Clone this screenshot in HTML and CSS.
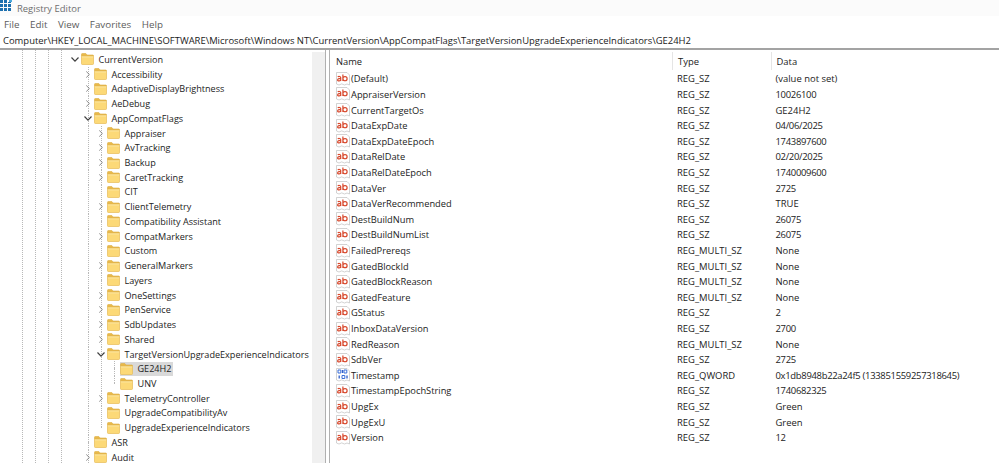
FILE: index.html
```html
<!DOCTYPE html>
<html lang="en">
<head>
<meta charset="utf-8">
<title>Registry Editor</title>
<link rel="stylesheet" href="styles.css">
</head>
<body>
<svg class="defs" width="0" height="0" aria-hidden="true">
  <symbol id="folder" viewBox="0 0 13 12">
    <path d="M.5 2V1.200c0-.4.3-.7.7-.7h3.600l1.400 1.500h5.600c.4 0 .7.3.7.7V3H.5z" fill="#e9b949" stroke="#dcae45" stroke-width=".6"/>
    <path d="M.5 3.200h12v7.600c0 .4-.3.7-.7.7H1.200c-.4 0-.7-.3-.7-.7V3.200z" fill="#fcd977" stroke="#e6bb58" stroke-width=".7"/>
    <path d="M1 4h11" stroke="#fdeaa8" stroke-width=".8"/>
  </symbol>
  <symbol id="closed" viewBox="0 0 7 9"><path d="M1.500 1l3.600 3.500L1.500 8" fill="none" stroke="#808080" stroke-width="1.100"/></symbol>
  <symbol id="open" viewBox="0 0 9 7"><path d="M1 1.500l3.500 3.600L8 1.500" fill="none" stroke="#404040" stroke-width="1.200"/></symbol>
  <symbol id="sz" viewBox="0 0 14 14">
    <path d="M.5.500h10.500l2.500 2.500v10l-2.500-1-2.500 1-2.800-1.100-2.700 1.100L.5 12z" fill="#fff" stroke="#c0c0c0" stroke-width=".7"/>
    <path d="M1.800 5c.6-.8 2.900-.8 2.900.6v3.300M4.700 6.800c-.6-.4-3.100-.3-3.100 1.100 0 1.400 2.500 1.200 3.100.1M6.900 2.500v6.400M6.900 6.700c0-2.700 4.200-2.700 4.200 0s-4.200 2.700-4.200 0z" fill="none" stroke="#d8482c" stroke-width="1.200"/>
  </symbol>
  <symbol id="qw" viewBox="0 0 14 14">
    <path d="M.5.500h10.500l2.500 2.500v10l-2.500-1-2.500 1-2.800-1.100-2.700 1.100L.5 12z" fill="#fff" stroke="#c0c0c0" stroke-width=".7"/>
    <path d="M2 2h2.800v3H2zM8 2h2.800v3H8zM6 7.500h2.800v3H6z" fill="none" stroke="#3a6fd8" stroke-width="1"/>
    <path d="M6.500 2v3M3.200 7.500v3M11 7.500v3" stroke="#2f5fc8" stroke-width="1.300"/>
  </symbol>
</svg>
<div class="app">
  <header class="titlebar">
    <svg class="appicon" width="14" height="13" viewBox="0 0 14 13" aria-hidden="true">
      <path d="M0 1h3v3h-3zM4 1h3v3h-3zM8 3h3v1h-3zM0 5h3v3h-3zM4 5h3v3h-3zM8 5h3v3h-3zM0 9h3v3h-3zM4 9h3v3h-3zM8 9h3v3h-3z" fill="#1c6fae"/>
      <path d="M9 0h3v3h-3z" fill="#4aa8dc"/>
    </svg>
    <span>Registry Editor</span>
  </header>
  <nav class="menubar"><span>File</span><span>Edit</span><span>View</span><span>Favorites</span><span>Help</span></nav>
  <div class="address">Computer\HKEY_LOCAL_MACHINE\SOFTWARE\Microsoft\Windows NT\CurrentVersion\AppCompatFlags\TargetVersionUpgradeExperienceIndicators\GE24H2</div>
  <main class="panes">
    <section class="tree">
      <div class="treerows">
        <div class="row l0"><svg class="chev-open"><use href="#open"/></svg><svg class="fld"><use href="#folder"/></svg><span>CurrentVersion</span></div>
        <div class="row l1 v88"><svg class="chev"><use href="#closed"/></svg><svg class="fld"><use href="#folder"/></svg><span>Accessibility</span></div>
        <div class="row l1 v88"><svg class="chev"><use href="#closed"/></svg><svg class="fld"><use href="#folder"/></svg><span>AdaptiveDisplayBrightness</span></div>
        <div class="row l1 v88"><svg class="chev"><use href="#closed"/></svg><svg class="fld"><use href="#folder"/></svg><span>AeDebug</span></div>
        <div class="row l1 v88"><svg class="chev-open"><use href="#open"/></svg><svg class="fld"><use href="#folder"/></svg><span>AppCompatFlags</span></div>
        <div class="row l2 v101"><svg class="chev"><use href="#closed"/></svg><svg class="fld"><use href="#folder"/></svg><span>Appraiser</span></div>
        <div class="row l2 v101"><svg class="chev"><use href="#closed"/></svg><svg class="fld"><use href="#folder"/></svg><span>AvTracking</span></div>
        <div class="row l2 v101"><svg class="chev"><use href="#closed"/></svg><svg class="fld"><use href="#folder"/></svg><span>Backup</span></div>
        <div class="row l2 v101"><svg class="chev"><use href="#closed"/></svg><svg class="fld"><use href="#folder"/></svg><span>CaretTracking</span></div>
        <div class="row l2 v101"><i class="stub"></i><svg class="fld"><use href="#folder"/></svg><span>CIT</span></div>
        <div class="row l2 v101"><svg class="chev"><use href="#closed"/></svg><svg class="fld"><use href="#folder"/></svg><span>ClientTelemetry</span></div>
        <div class="row l2 v101"><i class="stub"></i><svg class="fld"><use href="#folder"/></svg><span>Compatibility Assistant</span></div>
        <div class="row l2 v101"><svg class="chev"><use href="#closed"/></svg><svg class="fld"><use href="#folder"/></svg><span>CompatMarkers</span></div>
        <div class="row l2 v101"><i class="stub"></i><svg class="fld"><use href="#folder"/></svg><span>Custom</span></div>
        <div class="row l2 v101"><svg class="chev"><use href="#closed"/></svg><svg class="fld"><use href="#folder"/></svg><span>GeneralMarkers</span></div>
        <div class="row l2 v101"><i class="stub"></i><svg class="fld"><use href="#folder"/></svg><span>Layers</span></div>
        <div class="row l2 v101"><svg class="chev"><use href="#closed"/></svg><svg class="fld"><use href="#folder"/></svg><span>OneSettings</span></div>
        <div class="row l2 v101"><svg class="chev"><use href="#closed"/></svg><svg class="fld"><use href="#folder"/></svg><span>PenService</span></div>
        <div class="row l2 v101"><svg class="chev"><use href="#closed"/></svg><svg class="fld"><use href="#folder"/></svg><span>SdbUpdates</span></div>
        <div class="row l2 v101"><svg class="chev"><use href="#closed"/></svg><svg class="fld"><use href="#folder"/></svg><span>Shared</span></div>
        <div class="row l2 v101"><svg class="chev-open"><use href="#open"/></svg><svg class="fld"><use href="#folder"/></svg><span>TargetVersionUpgradeExperienceIndicators</span></div>
        <div class="row l3 v114"><i class="stub"></i><span class="selected"><svg class="fld"><use href="#folder"/></svg><span>GE24H2</span></span></div>
        <div class="row l3 v114-end"><i class="stub"></i><svg class="fld"><use href="#folder"/></svg><span>UNV</span></div>
        <div class="row l2 v101"><svg class="chev"><use href="#closed"/></svg><svg class="fld"><use href="#folder"/></svg><span>TelemetryController</span></div>
        <div class="row l2 v101"><i class="stub"></i><svg class="fld"><use href="#folder"/></svg><span>UpgradeCompatibilityAv</span></div>
        <div class="row l2 v101-end"><i class="stub"></i><svg class="fld"><use href="#folder"/></svg><span>UpgradeExperienceIndicators</span></div>
        <div class="row l1 v88"><i class="stub"></i><svg class="fld"><use href="#folder"/></svg><span>ASR</span></div>
        <div class="row l1 v88"><svg class="chev"><use href="#closed"/></svg><svg class="fld"><use href="#folder"/></svg><span>Audit</span></div>
      </div>
      <div class="scrolltrack"></div>
    </section>
    <div class="splitter"></div>
    <section class="values">
      <div class="vhead"><div class="c-name">Name</div><div class="c-type">Type</div><div class="c-data">Data</div></div>
      <div class="vrow"><div class="c-name"><svg class="vi"><use href="#sz"/></svg>(Default)</div><div class="c-type">REG_SZ</div><div class="c-data">(value not set)</div></div>
      <div class="vrow"><div class="c-name"><svg class="vi"><use href="#sz"/></svg>AppraiserVersion</div><div class="c-type">REG_SZ</div><div class="c-data num">10026100</div></div>
      <div class="vrow"><div class="c-name"><svg class="vi"><use href="#sz"/></svg>CurrentTargetOs</div><div class="c-type">REG_SZ</div><div class="c-data">GE24H2</div></div>
      <div class="vrow"><div class="c-name"><svg class="vi"><use href="#sz"/></svg>DataExpDate</div><div class="c-type">REG_SZ</div><div class="c-data num">04/06/2025</div></div>
      <div class="vrow"><div class="c-name"><svg class="vi"><use href="#sz"/></svg>DataExpDateEpoch</div><div class="c-type">REG_SZ</div><div class="c-data num">1743897600</div></div>
      <div class="vrow"><div class="c-name"><svg class="vi"><use href="#sz"/></svg>DataRelDate</div><div class="c-type">REG_SZ</div><div class="c-data num">02/20/2025</div></div>
      <div class="vrow"><div class="c-name"><svg class="vi"><use href="#sz"/></svg>DataRelDateEpoch</div><div class="c-type">REG_SZ</div><div class="c-data num">1740009600</div></div>
      <div class="vrow"><div class="c-name"><svg class="vi"><use href="#sz"/></svg>DataVer</div><div class="c-type">REG_SZ</div><div class="c-data num">2725</div></div>
      <div class="vrow"><div class="c-name"><svg class="vi"><use href="#sz"/></svg>DataVerRecommended</div><div class="c-type">REG_SZ</div><div class="c-data">TRUE</div></div>
      <div class="vrow"><div class="c-name"><svg class="vi"><use href="#sz"/></svg>DestBuildNum</div><div class="c-type">REG_SZ</div><div class="c-data num">26075</div></div>
      <div class="vrow"><div class="c-name"><svg class="vi"><use href="#sz"/></svg>DestBuildNumList</div><div class="c-type">REG_SZ</div><div class="c-data num">26075</div></div>
      <div class="vrow"><div class="c-name"><svg class="vi"><use href="#sz"/></svg>FailedPrereqs</div><div class="c-type">REG_MULTI_SZ</div><div class="c-data">None</div></div>
      <div class="vrow"><div class="c-name"><svg class="vi"><use href="#sz"/></svg>GatedBlockId</div><div class="c-type">REG_MULTI_SZ</div><div class="c-data">None</div></div>
      <div class="vrow"><div class="c-name"><svg class="vi"><use href="#sz"/></svg>GatedBlockReason</div><div class="c-type">REG_MULTI_SZ</div><div class="c-data">None</div></div>
      <div class="vrow"><div class="c-name"><svg class="vi"><use href="#sz"/></svg>GatedFeature</div><div class="c-type">REG_MULTI_SZ</div><div class="c-data">None</div></div>
      <div class="vrow"><div class="c-name"><svg class="vi"><use href="#sz"/></svg>GStatus</div><div class="c-type">REG_SZ</div><div class="c-data num">2</div></div>
      <div class="vrow"><div class="c-name"><svg class="vi"><use href="#sz"/></svg>InboxDataVersion</div><div class="c-type">REG_SZ</div><div class="c-data num">2700</div></div>
      <div class="vrow"><div class="c-name"><svg class="vi"><use href="#sz"/></svg>RedReason</div><div class="c-type">REG_MULTI_SZ</div><div class="c-data">None</div></div>
      <div class="vrow"><div class="c-name"><svg class="vi"><use href="#sz"/></svg>SdbVer</div><div class="c-type">REG_SZ</div><div class="c-data num">2725</div></div>
      <div class="vrow"><div class="c-name"><svg class="vi"><use href="#qw"/></svg>Timestamp</div><div class="c-type">REG_QWORD</div><div class="c-data num">0x1db8948b22a24f5 (133851559257318645)</div></div>
      <div class="vrow"><div class="c-name"><svg class="vi"><use href="#sz"/></svg>TimestampEpochString</div><div class="c-type">REG_SZ</div><div class="c-data num">1740682325</div></div>
      <div class="vrow"><div class="c-name"><svg class="vi"><use href="#sz"/></svg>UpgEx</div><div class="c-type">REG_SZ</div><div class="c-data">Green</div></div>
      <div class="vrow"><div class="c-name"><svg class="vi"><use href="#sz"/></svg>UpgExU</div><div class="c-type">REG_SZ</div><div class="c-data">Green</div></div>
      <div class="vrow"><div class="c-name"><svg class="vi"><use href="#sz"/></svg>Version</div><div class="c-type">REG_SZ</div><div class="c-data num">12</div></div>
    </section>
  </main>
</div>
</body>
</html>
```
FILE: styles.css
```css
* { box-sizing: border-box; }
html, body { margin: 0; height: 100%; overflow: hidden; background: #fff; }
body { font-family: "Open Sans", "Noto Sans", sans-serif; font-size: 9.45px; color: #222; }
.defs { display: block; height: 0; }
.app { width: 999px; height: 463px; display: flex; flex-direction: column; overflow: hidden; }
.titlebar { height: 16px; flex: none; display: flex; align-items: center; gap: 3px; background: #fbfbfb; color: #6e6e6e; overflow: hidden; }
.appicon { flex: none; align-self: flex-start; margin-top: -1px; }
.menubar { height: 17px; flex: none; display: flex; align-items: center; gap: 10.5px; padding-left: 4px; font-size: 9.8px; color: #5c5c5c; background: #fff; }
.address { height: 17px; flex: none; display: flex; align-items: center; padding-left: 3px; border-bottom: 2px solid #a3a3a3; white-space: nowrap; color: #1a1a1a; }
.panes { flex: 1; display: flex; min-height: 0; }
.tree {
  width: 325px; flex: none; display: flex; overflow: hidden; padding-top: 2px; font-size: 9.1px;
  --dot: repeating-linear-gradient(to bottom, #b8b8b8 0 1px, transparent 1px 2px);
  background-image: var(--dot), var(--dot), var(--dot), var(--dot);
  background-size: 1px 100%;
  background-repeat: no-repeat;
  background-position: 22px 0, 35px 0, 48px 0, 61px 0;
}
.treerows { flex: 1; min-width: 0; }
.scrolltrack { width: 13px; flex: none; background: #f0f0f0; }
.row {
  height: 14.74px; display: flex; align-items: center; white-space: nowrap; color: #222;
  background-repeat: no-repeat; background-size: 1px 100%;
  --dot: repeating-linear-gradient(to bottom, #b8b8b8 0 1px, transparent 1px 2px);
}
.l0 { padding-left: 69px; }
.l1 { padding-left: 82px; }
.l2 { padding-left: 95px; }
.l3 { padding-left: 108px; }
.chev { width: 12px; height: 9px; flex: none; padding: 0 3px; }
.chev-open { width: 12px; height: 7px; flex: none; }
.stub { width: 12px; height: 1px; flex: none; background: repeating-linear-gradient(to right, transparent 0 6px, #b8b8b8 6px 7px, transparent 7px 8px); }
.fld { width: 13px; height: 12px; flex: none; margin-right: 4.5px; }
.v88 { background-image: var(--dot); background-position: 88px 0; }
.v101 { background-image: var(--dot), var(--dot); background-position: 88px 0, 101px 0; }
.v101-end { background-image: var(--dot), var(--dot); background-position: 88px 0, 101px 0; background-size: 1px 100%, 1px 50%; }
.v114 { background-image: var(--dot), var(--dot), var(--dot); background-position: 88px 0, 101px 0, 114px 0; }
.v114-end { background-image: var(--dot), var(--dot), var(--dot); background-position: 88px 0, 101px 0, 114px 0; background-size: 1px 100%, 1px 100%, 1px 50%; }
.selected { display: flex; align-items: center; height: 14px; background: #d9d9d9; padding-right: 2px; }
.splitter { width: 4px; flex: none; background: #fff; border-left: 1px solid #b0b0b0; }
.values { flex: 1; min-width: 0; padding-top: 2px; padding-left: 6px; border-left: 1px solid #b0b0b0; }
.vhead, .vrow { display: flex; white-space: nowrap; align-items: center; }
.vhead { height: 18px; margin-bottom: 1px; }
.vrow { height: 15.61px; }
.c-name { width: 341px; flex: none; display: flex; align-items: center; font-size: 9.3px; }
.c-type { width: 98.5px; flex: none; }
.c-data { flex: 1; }
.num { letter-spacing: -.3px; }
.vhead .c-type, .vhead .c-data { border-left: 1px solid #e5e5e5; margin-left: -5px; padding-left: 5px; height: 100%; display: flex; align-items: center; }
.vhead .c-type { width: 103.5px; }
.vi { width: 14px; height: 14px; flex: none; margin-right: 1px; }
```
